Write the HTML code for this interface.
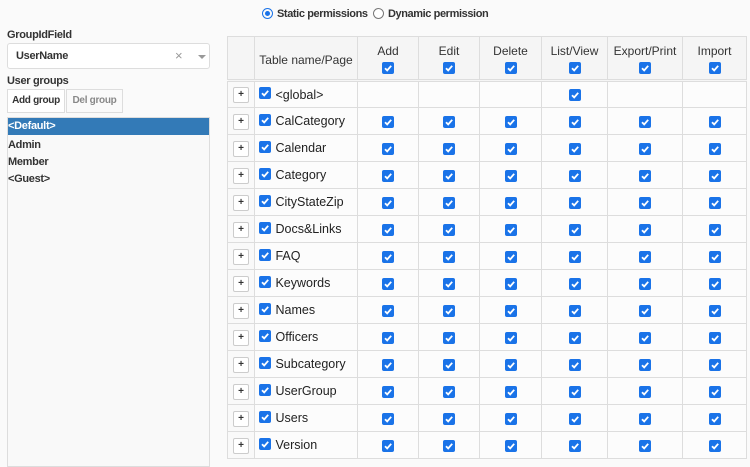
<!DOCTYPE html>
<html><head><meta charset="utf-8"><style>
*{box-sizing:border-box;margin:0;padding:0}
body{width:750px;height:462px;overflow:hidden;background:#fafafa;font-family:"Liberation Sans",Arial,sans-serif;position:relative;color:#333}
.b{font-weight:bold;font-size:11px;letter-spacing:-0.3px;color:#333}
.abs{position:absolute}
.cb{display:inline-block;width:12px;height:12px;border-radius:2px;background:#1a73e8;vertical-align:middle;position:relative}
.cb svg{position:absolute;left:0;top:0}
table{position:absolute;left:227px;top:36px;border-collapse:collapse;table-layout:fixed;font-size:12px}
td,th{border:1px solid #ddd;text-align:center;vertical-align:middle;background:#fcfcfc}
th{background:#f5f5f5;font-weight:normal;color:#333;height:44px;padding-top:2px;line-height:16px}
thead tr{border-bottom:3px double #ddd}
tbody td{height:27px}
td.n{text-align:left;padding-left:4px;font-size:12.5px;color:#222;white-space:nowrap}
td.n .cb{margin-right:1px;margin-top:-4px}
.plus{display:inline-block;width:16px;height:16px;border:1px solid #ccc;border-radius:2px;background:#fff;font-size:10px;line-height:14px;text-align:center;color:#333;font-weight:bold}
</style></head><body>
<div class="abs b" style="left:262px;top:8px;font-size:11px;letter-spacing:-0.4px"><span style="display:inline-block;width:11px;height:11px;border-radius:50%;border:1px solid #1a73e8;vertical-align:-2px;position:relative;margin-right:4px"><span style="position:absolute;left:2px;top:2px;width:5px;height:5px;border-radius:50%;background:#1a73e8"></span></span>Static permissions &nbsp;<span style="display:inline-block;width:11px;height:11px;border-radius:50%;border:1px solid #777;vertical-align:-2px;margin-right:4px;background:#fff"></span>Dynamic permission</div>
<div class="abs b" style="left:7px;top:29px">GroupIdField</div>
<div class="abs" style="left:7px;top:43px;width:203px;height:26px;border:1px solid #ddd;border-radius:3px;background:#fff"><span class="b" style="position:absolute;left:8px;top:6px">UserName</span><span style="position:absolute;left:167px;top:4px;color:#999;font-size:13px">×</span><span style="position:absolute;left:190px;top:11px;border-left:4px solid transparent;border-right:4px solid transparent;border-top:4px solid #999"></span></div>
<div class="abs b" style="left:7px;top:75px">User groups</div>
<div class="abs b" style="left:7px;top:89px;width:58px;height:24px;border:1px solid #ddd;background:#fff;text-align:center;line-height:22px;font-size:10px">Add group</div>
<div class="abs b" style="left:66px;top:89px;width:57px;height:24px;border:1px solid #ddd;background:#fafafa;text-align:center;line-height:22px;font-size:10px;color:#888">Del group</div>
<div class="abs" style="left:7px;top:117px;width:203px;height:350px;border:1px solid #ddd;background:#f9f9f9">
<div class="b" style="background:#337ab7;color:#fff;height:17px;line-height:17px">&lt;Default&gt;</div>
<div class="b" style="line-height:17px;margin-top:2px">Admin</div>
<div class="b" style="line-height:17px">Member</div>
<div class="b" style="line-height:17px">&lt;Guest&gt;</div>
</div>
<table>
<colgroup><col style="width:27px"><col style="width:103px"><col style="width:61px"><col style="width:61px"><col style="width:62px"><col style="width:66px"><col style="width:75px"><col style="width:64px"></colgroup>
<thead><tr><th></th><th style="padding-top:4px">Table name/Page</th>
<th>Add<br>@</th><th>Edit<br>@</th><th>Delete<br>@</th><th>List/View<br>@</th><th>Export/Print<br>@</th><th>Import<br>@</th></tr></thead>
<tbody id="tb"></tbody></table>
<script>
var C='<span class="cb"><svg width="12" height="12"><path d="M3 6.2 L5.2 8.4 L9.2 3.8" stroke="#fff" stroke-width="1.8" fill="none"/></svg></span>';
document.querySelectorAll('th').forEach(function(t){t.innerHTML=t.innerHTML.replace('@',C)});
var names=['&lt;global&gt;','CalCategory','Calendar','Category','CityStateZip','Docs&amp;Links','FAQ','Keywords','Names','Officers','Subcategory','UserGroup','Users','Version'];
var h='';
names.forEach(function(n,i){h+='<tr><td style="background:#f9f9f9"><span class="plus">+</span></td><td class="n">'+C+' '+n+'</td>';
for(var j=0;j<6;j++){h+='<td>'+((i==0&&j!=3)?'':C)+'</td>';}h+='</tr>';});
document.getElementById('tb').innerHTML=h;
</script>
</body></html>
